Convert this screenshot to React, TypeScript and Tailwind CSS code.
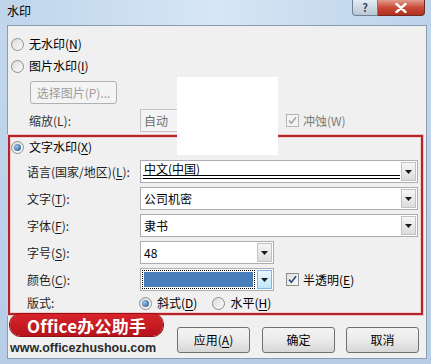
import React from "react";

const FONT = "font-['Microsoft_YaHei','Noto_Sans_CJK_SC',sans-serif]";

function Radio({ checked }: { checked?: boolean }) {
  return (
    <span className="flex h-[13px] w-[13px] shrink-0 items-center justify-center rounded-full border border-[#8e8f8f] bg-linear-to-br from-[#dcdcdc] to-[#fbfbfb]">
      {checked && (
        <span className="h-[7px] w-[7px] rounded-full bg-[radial-gradient(circle_at_35%_35%,#9cc3ea,#1d4f8a)]" />
      )}
    </span>
  );
}

function Check({ disabled }: { disabled?: boolean }) {
  return (
    <span
      className={`flex h-[13px] w-[13px] shrink-0 items-center justify-center border ${
        disabled ? "border-[#b5b5b5] bg-[#f4f4f4]" : "border-[#8e8f8f] bg-linear-to-br from-[#dedede] to-[#fbfbfb]"
      }`}
    >
      <svg width="9" height="9" viewBox="0 0 9 9">
        <path
          d="M1 4.6 L3.4 7.2 L8 1.2"
          fill="none"
          stroke={disabled ? "#a8a8a8" : "#2c4a86"}
          strokeWidth="1.6"
        />
      </svg>
    </span>
  );
}

function DropBtn({ blue }: { blue?: boolean }) {
  return (
    <span
      className={`m-[1px] flex w-[15px] shrink-0 items-center justify-center border ${
        blue
          ? "border-[#7eb4ea] bg-linear-to-b from-[#eaf6fd] to-[#bee6fd]"
          : "border-[#c2c2c2] bg-linear-to-b from-[#f6f6f6] to-[#dcdcdc]"
      }`}
    >
      <svg width="7" height="4" viewBox="0 0 7 4">
        <path d="M0 0 H7 L3.5 4 Z" fill="#1a1a1a" />
      </svg>
    </span>
  );
}

function U({ c }: { c: string }) {
  return <span className="underline underline-offset-[2px]">{c}</span>;
}

function Combo({
  w,
  text,
  children,
  top,
}: {
  w: string;
  text?: string;
  children?: React.ReactNode;
  top?: boolean;
}) {
  return (
    <div className={`relative flex h-[23px] ${w} border border-[#abadb3] bg-white`}>
      <div
        className={`flex flex-1 pl-[3px] text-[12px] text-black ${
          top ? "items-start pt-[1px] leading-[14px]" : "items-center"
        }`}
      >
        {text}
      </div>
      {children}
      <DropBtn />
    </div>
  );
}

function Button({ children, disabled, w }: { children: React.ReactNode; disabled?: boolean; w: string }) {
  return (
    <div
      className={`flex ${w} items-center justify-center rounded-[3px] border text-[12px] ${
        disabled
          ? "border-[#adb2b5] bg-[#f4f4f4] text-[#9d9d9d]"
          : "border-[#707070] bg-linear-to-b from-[#f3f3f3] via-[#ebebeb] to-[#d6d6d6] text-black"
      }`}
    >
      {children}
    </div>
  );
}

function LabelRow({ label, children }: { label: React.ReactNode; children: React.ReactNode }) {
  return (
    <div className="flex h-[23px] items-center">
      <div className="w-[130px] whitespace-nowrap pl-[17px] text-[12px] text-[#1e1e1e]">{label}</div>
      {children}
    </div>
  );
}

export default function App() {
  return (
    <div className={`relative h-[364px] w-[431px] overflow-hidden bg-linear-to-b from-[#c3d8ee] to-[#b7cde6] ${FONT}`}>
      {/* title bar */}
      <div className="flex h-[25px] items-start justify-between bg-linear-to-r from-[#bfd5ec] via-[#d6e6f5] to-[#bcd2ea] pl-[7px] pr-[6px]">
        <span className="mt-[3px] text-[12px] leading-[16px] text-black">水印</span>
        <div className="flex h-[16px]">
          <div className="flex w-[26px] items-center justify-center rounded-bl-[4px] border border-t-0 border-[#6f7f94] bg-linear-to-b from-[#e4ecf4] to-[#b9c7d6] text-[11px] font-bold leading-none text-[#3b4a5e]">
            ?
          </div>
          <div className="flex w-[47px] items-center justify-center rounded-br-[4px] border border-l-0 border-t-0 border-[#6f2a22] bg-linear-to-b from-[#e29b8c] via-[#c9493a] to-[#b1301f]">
            <svg width="12" height="10" viewBox="0 0 12 10">
              <path d="M1.5 1 L10.5 9 M10.5 1 L1.5 9" stroke="#fff" strokeWidth="2.4" strokeLinecap="round" />
            </svg>
          </div>
        </div>
      </div>

      {/* content */}
      <div className="relative ml-[7px] flex h-[334px] w-[420px] flex-col border border-[#8a9bb2] bg-[#f0f0f0] text-[12px]">
        <div className="mt-[7px] flex h-[22px] items-center pl-[3px]">
          <Radio />
          <span className="ml-[5px]">
            无水印(<U c="N" />)
          </span>
        </div>
        <div className="flex h-[22px] items-center pl-[3px]">
          <Radio />
          <span className="ml-[5px]">
            图片水印(<U c="I" />)
          </span>
        </div>
        <div className="ml-[22px] mt-[4px] flex h-[23px]">
          <Button disabled w="w-[87px]">
            选择图片(P)...
          </Button>
        </div>
        <div className="mt-[5px] flex h-[23px] items-center">
          <div className="w-[132px] pl-[21px] text-[#333]">缩放(L):</div>
          <div className="flex h-[23px] w-[130px] items-center border border-[#c2c4c8] bg-[#f4f4f4] pl-[3px] text-[#6d6d6d]">
            自动
          </div>
          <div className="ml-[16px] flex items-center">
            <Check disabled />
            <span className="ml-[4px] text-[#7a7a7a]">冲蚀(W)</span>
          </div>
        </div>

        {/* red frame */}
        <div className="mt-[3px] flex h-[180px] w-[415px] flex-col border-2 border-[#b3242b] shadow-[0_0_0_1px_#efc3c3,inset_0_0_0_1px_#f3cdcd]">
          <div className="flex h-[20px] items-center pl-[1px]">
            <Radio checked />
            <span className="ml-[5px]">
              文字水印(<U c="X" />)
            </span>
          </div>
          <div className="mt-[3px] flex flex-col gap-[4px]">
            <LabelRow
              label={
                <>
                  语言(国家/地区)(<U c="L" />):
                </>
              }
            >
              <Combo w="w-[278px]" text="中文(中国)" top>
                <div className="absolute bottom-[3px] left-[2px] right-[17px] h-[4px] border-b-[4px] border-double border-black" />
              </Combo>
            </LabelRow>
            <LabelRow
              label={
                <>
                  文字(<U c="T" />):
                </>
              }
            >
              <Combo w="w-[278px]" text="公司机密" />
            </LabelRow>
            <LabelRow
              label={
                <>
                  字体(<U c="F" />):
                </>
              }
            >
              <Combo w="w-[278px]" text="隶书" />
            </LabelRow>
            <LabelRow
              label={
                <>
                  字号(<U c="S" />):
                </>
              }
            >
              <Combo w="w-[134px]" text="48" />
            </LabelRow>
            <LabelRow
              label={
                <>
                  颜色(<U c="C" />):
                </>
              }
            >
              <div className="flex h-[23px] w-[134px] border border-[#abadb3] bg-white">
                <div className="m-[1px] flex flex-1 border border-dotted border-black p-[1px]">
                  <div className="flex-1 bg-[#4a7ebb]" />
                </div>
                <DropBtn blue />
              </div>
              <div className="ml-[12px] flex items-center">
                <Check />
                <span className="ml-[4px]">
                  半透明(<U c="E" />)
                </span>
              </div>
            </LabelRow>
          </div>
          <div className="mt-[2px] flex h-[20px] items-center">
            <div className="w-[129px] pl-[17px] text-[#1e1e1e]">版式:</div>
            <Radio checked />
            <span className="ml-[5px]">
              斜式(<U c="D" />)
            </span>
            <span className="ml-[15px]">
              <Radio />
            </span>
            <span className="ml-[5px]">
              水平(<U c="H" />)
            </span>
          </div>
        </div>

        {/* bottom */}
        <div className="flex flex-1">
          <div className="ml-[2px] flex w-[153px] flex-col">
            <div className="-mt-[1px] flex h-[22px] items-center justify-center rounded-full bg-linear-to-b from-[#d8232a] to-[#b5141b] shadow-[0_0_0_1px_#8e1015]">
              <span className="text-[17px] font-bold leading-none tracking-[0.2px] text-white">Office办公助手</span>
            </div>
            <div className="mt-[5px] font-['Liberation_Sans',sans-serif] text-[12.5px] font-bold leading-[14px] text-[#2b2b2b]">
              www.officezhushou.com
            </div>
          </div>
          <div className="ml-[14px] mt-[12px] flex h-[26px]">
            <Button w="w-[73px]">
              应用(<U c="A" />)
            </Button>
            <div className="ml-[12px] flex">
              <Button w="w-[73px]">确定</Button>
            </div>
            <div className="ml-[11px] flex">
              <Button w="w-[73px]">取消</Button>
            </div>
          </div>
        </div>

        {/* white redaction box */}
        <div className="absolute left-[169px] top-[51px] h-[78px] w-[101px] bg-white" />
      </div>
    </div>
  );
}
